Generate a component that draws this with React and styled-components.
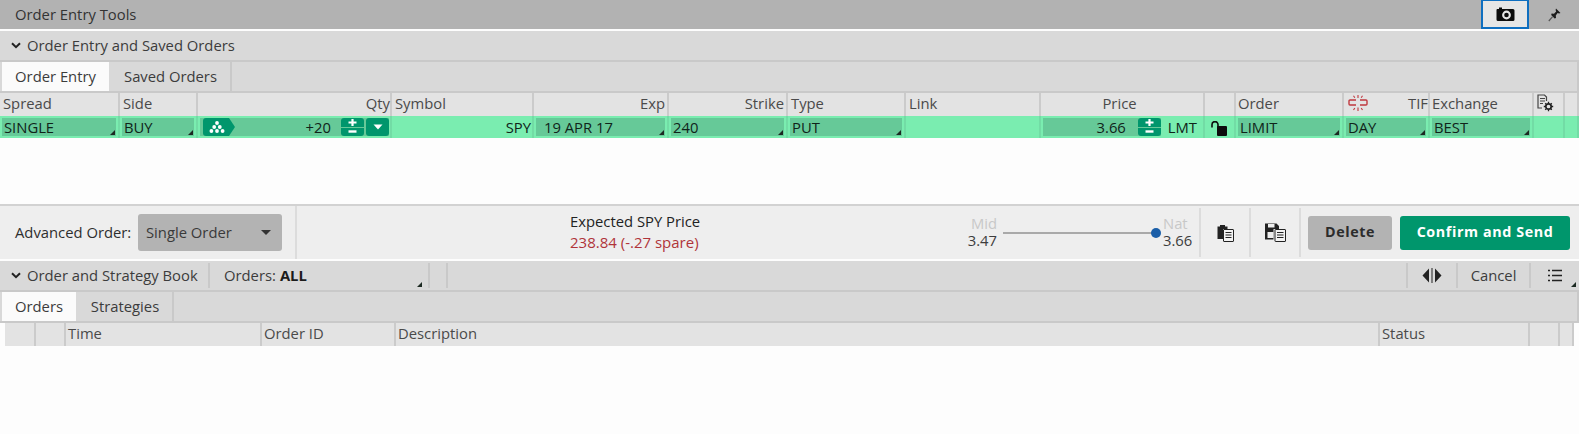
import React from "react";
import styled, { createGlobalStyle } from "styled-components";

const Global = createGlobalStyle`
  html, body { margin: 0; padding: 0; background: #fdfdfd; }
  body { font-family: "Open Sans", "Noto Sans", sans-serif; font-size: 14.8px; color: #3a3a3a; overflow: hidden; }
  * { box-sizing: border-box; }
`;

const Page = styled.div`
  width: 1579px;
  height: 434px;
  display: flex;
  flex-direction: column;
  background: #fdfdfd;
`;

const TitleBar = styled.header`
  height: 29px;
  background: #b2b2b2;
  display: flex;
  align-items: center;
  padding-left: 15px;
  color: #333;
  margin-bottom: 2px;
`;
const Title = styled.span`
  flex: 1;
  margin-bottom: 2px;
`;
const CameraButton = styled.button`
  width: 48px;
  height: 29px;
  padding: 0;
  border: 2px solid #0f6fc0;
  border-top-width: 1px;
  background: #e6e6e6;
  display: flex;
  align-items: center;
  justify-content: center;
`;
const PinButton = styled.span`
  width: 50px;
  height: 29px;
  display: flex;
  align-items: center;
  justify-content: center;
`;

const SectionBar = styled.div`
  height: 31px;
  background: #d9d9d9;
  border-bottom: 2px solid #c9c9c9;
  display: flex;
  align-items: center;
  color: #3c3c3c;
`;
const Chevron = styled.svg`
  margin-left: 11px;
  margin-right: 6px;
  flex: none;
`;
const BarSeg = styled.div`
  height: 25px;
  width: ${(p) => p.$w}px;
  flex: ${(p) => (p.$w ? "none" : 1)};
  border-right: ${(p) => (p.$noline ? "none" : "2px solid #c9c9c9")};
  display: flex;
  align-items: center;
  justify-content: ${(p) => (p.$center ? "center" : "flex-start")};
  padding-left: ${(p) => p.$pl || 0}px;
  position: relative;
`;
const Strong = styled.b`
  font-weight: 700;
  color: #1c1c1c;
  margin-left: 4px;
`;

const TabStrip = styled.div`
  height: 31px;
  background: #d9d9d9;
  border-bottom: 2px solid #c9c9c9;
  border-right: 2px solid #c9c9c9;
  display: flex;
  padding-left: 2px;
`;
const Tab = styled.div`
  height: 29px;
  width: ${(p) => p.$w}px;
  background: ${(p) => (p.$active ? "#fbfbfb" : "#d9d9d9")};
  border-right: 2px solid #c9c9c9;
  margin-right: ${(p) => (p.$active ? 2 : 0)}px;
  padding-bottom: 2px;
  display: flex;
  align-items: center;
  justify-content: center;
  color: #3c3c3c;
`;
const ActiveTab = styled(Tab)`
  border-right: 0;
`;

const COLS = "120px 78px 194px 142px 135px 119px 118px 135px 164px 31px 108px 86px 104px 31px 14px";

const HeadRow = styled.div`
  display: grid;
  grid-template-columns: ${COLS};
  height: 23px;
  background: #e3e3e3;
`;
const HeadCell = styled.div`
  border-right: 2px solid #cbcbcb;
  display: flex;
  align-items: center;
  justify-content: ${(p) => p.$align || "flex-start"};
  padding: 0 ${(p) => p.$pr ?? 3}px 3px ${(p) => p.$pl ?? 3}px;
  color: #4a4a4a;
  white-space: nowrap;
  line-height: 1;
  position: relative;
`;
const OrderRow = styled.div`
  display: grid;
  grid-template-columns: ${COLS};
  height: 22px;
  background: #7aedb0;
`;
const RowCell = styled.div`
  border-right: 2px solid #72dca5;
  padding: 2px ${(p) => p.$pr ?? 2}px 2px 2px;
  display: flex;
  min-width: 0;
`;
const Field = styled.div`
  flex: 1;
  height: 18px;
  background: #66c998;
  color: #10241a;
  display: flex;
  align-items: center;
  padding: 0 ${(p) => p.$pr ?? 2}px 0 ${(p) => p.$pl || 2}px;
  justify-content: ${(p) => p.$align || "flex-start"};
  position: relative;
  white-space: nowrap;
  line-height: 1;
`;
const Corner = styled.i`
  position: absolute;
  right: ${(p) => p.$r || 1}px;
  bottom: ${(p) => p.$b || 1}px;
  width: 0;
  height: 0;
  border-left: 5px solid transparent;
  border-bottom: 5px solid #1c2a22;
`;
const PlainCell = styled(RowCell)`
  align-items: center;
  justify-content: ${(p) => p.$align || "flex-end"};
  color: #10241a;
  line-height: 1;
  padding: ${(p) => p.$pad || "0 1px 0 0"};
`;
const Stepper = styled.span`
  width: 23px;
  height: 18px;
  display: flex;
  flex-direction: column;
  gap: 1px;
  flex: none;
`;
const StepPart = styled.span`
  flex: 1;
  background: #00966c;
  color: #fff;
  border-radius: ${(p) => (p.$top ? "3px 3px 0 0" : "0 0 3px 3px")};
  display: flex;
  align-items: center;
  justify-content: center;
`;
const DropBtn = styled.span`
  width: 23px;
  height: 18px;
  margin-left: 2px;
  flex: none;
  background: #00966c;
  border-radius: 3px;
  display: flex;
  align-items: center;
  justify-content: center;
`;
const StrategyTag = styled.span`
  width: 32px;
  height: 18px;
  background: #00966c;
  border-radius: 3px 0 0 3px;
  clip-path: polygon(0 0, 26px 0, 100% 50%, 26px 100%, 0 100%);
  display: flex;
  align-items: center;
  padding-left: 6px;
  flex: none;
  margin-right: auto;
`;
const QtyValue = styled.span`margin-right: 10px;`;
const PriceValue = styled.span`margin-right: 12px;`;
const Lmt = styled.span`
  align-self: center;
  margin-left: 7px;
  margin-right: 4px;
  color: #10241a;
  line-height: 1;
  flex: none;
`;

const Blank = styled.div`
  height: 68px;
  background: #fdfdfd;
  border-bottom: 2px solid #d2d2d2;
`;

const ActionBar = styled.div`
  height: 53px;
  background: #eeeeee;
  display: flex;
  align-items: center;
  margin-bottom: 2px;
`;
const AdvancedGroup = styled.div`
  width: 297px;
  height: 100%;
  border-right: 2px solid #dcdcdc;
  display: flex;
  align-items: center;
  justify-content: space-between;
  padding: 0 13px 0 15px;
  color: #2e2e2e;
`;
const SelectBox = styled.div`
  width: 144px;
  height: 37px;
  background: #b3b3b3;
  border-radius: 3px;
  display: flex;
  align-items: center;
  justify-content: space-between;
  padding: 0 11px 2px 8px;
  color: #3a3a3a;
`;
const Caret = styled.i`
  width: 0;
  height: 0;
  margin-top: 2px;
  border-left: 5px solid transparent;
  border-right: 5px solid transparent;
  border-top: 5px solid #333;
`;
const Expected = styled.div`
  width: 660px;
  flex: none;
  padding: 0 0 2px 273px;
  line-height: 21px;
  color: #222;
`;
const Spare = styled.div`
  color: #b0343a;
  font-size: 15px;
`;
const PriceScale = styled.div`
  width: 242px;
  height: 100%;
  display: flex;
  align-items: center;
  flex: none;
`;
const PriceStack = styled.div`
  width: ${(p) => p.$w}px;
  margin-left: ${(p) => p.$ml || 0}px;
  display: flex;
  flex-direction: column;
  align-items: ${(p) => p.$items || "flex-end"};
  line-height: 17px;
  padding-bottom: 2px;
  color: #3d3d3d;
  flex: none;
`;
const Faint = styled.span`color: #c8c8c8;`;
const Track = styled.div`
  width: 154px;
  height: 2px;
  background: #a9a9a9;
  margin-left: 6px;
  position: relative;
  flex: none;
  &::after {
    content: "";
    position: absolute;
    right: -4px;
    top: -4px;
    width: 10px;
    height: 10px;
    border-radius: 50%;
    background: #1a5ea8;
  }
`;
const IconSlot = styled.div`
  width: 50px;
  height: 49px;
  border-left: 2px solid #dcdcdc;
  display: flex;
  align-items: center;
  justify-content: center;
  flex: none;
`;
const ButtonRow = styled.div`
  flex: 1;
  height: 49px;
  border-left: 2px solid #dcdcdc;
  display: flex;
  align-items: center;
  padding-left: 7px;
  gap: 8px;
`;
const ActionButton = styled.button`
  height: 34px;
  width: ${(p) => p.$w}px;
  border: 0;
  border-radius: 3px;
  background: ${(p) => (p.$primary ? "#00966c" : "#b3b3b3")};
  color: ${(p) => (p.$primary ? "#fff" : "#2c2c2c")};
  font-family: inherit;
  font-size: 14.3px;
  font-weight: 700;
  letter-spacing: 0.6px;
  padding: 0 0 2px;
`;

const Label = styled.span`
  white-space: nowrap;
  margin-bottom: 2px;
`;

const TableHead = styled.div`
  margin-left: 5px;
  width: 1569px;
  height: 23px;
  background: #e3e3e3;
  display: grid;
  grid-template-columns: 31px 30px 196px 134px 984px 150px 30px 14px;
`;
const BrokenIconWrap = styled.span`
  position: absolute;
  left: 4px;
  top: 2px;
  display: flex;
`;

const Check = (p) => (
  <Chevron width="10" height="7" viewBox="0 0 10 7" {...p}>
    <path d="M1 1.2 5 5.2 9 1.2" fill="none" stroke="#222" strokeWidth="2" />
  </Chevron>
);
const Cam = () => (
  <svg width="19" height="15" viewBox="0 0 19 15">
    <path d="M1 2h2V0.6h3V2h11a1.5 1.5 0 0 1 1.5 1.5v9A1.5 1.5 0 0 1 17 14H2a1.5 1.5 0 0 1-1.5-1.5v-9A1.5 1.5 0 0 1 1 2z" fill="#0c0c0c" />
    <circle cx="10.5" cy="8" r="4.4" fill="#e6e6e6" />
    <circle cx="10.5" cy="8" r="2.3" fill="#0c0c0c" />
  </svg>
);
const Pin = () => (
  <svg width="13" height="14" viewBox="0 0 13 14">
    <path d="M8 0.5 12.5 5 11 5.6 9.6 5 7.8 7.4 8 10 6.6 10.4 3.2 7 3.6 5.6 6 5.8 8.2 3.6 7.6 2z" fill="#1c1c1c" />
    <path d="M4.6 8.6 0.8 13" stroke="#555" strokeWidth="1.2" />
  </svg>
);
const Plus = () => (
  <svg width="9" height="7" viewBox="0 0 9 7"><path d="M0.5 3.5h8M4.5 0v7" stroke="#fff" strokeWidth="2.2" /></svg>
);
const Minus = () => (
  <svg width="9" height="3" viewBox="0 0 9 3"><path d="M0.5 1.5h8" stroke="#fff" strokeWidth="2.4" /></svg>
);
const Step = () => (
  <Stepper>
    <StepPart $top><Plus /></StepPart>
    <StepPart><Minus /></StepPart>
  </Stepper>
);
const Dots = () => (
  <svg width="16" height="12" viewBox="0 0 16 12" fill="#fff">
    <circle cx="8" cy="2" r="1.9" />
    <circle cx="5.2" cy="6" r="1.9" />
    <circle cx="10.8" cy="6" r="1.9" />
    <circle cx="2.4" cy="10" r="1.9" />
    <circle cx="8" cy="10" r="1.9" />
    <circle cx="13.6" cy="10" r="1.9" />
  </svg>
);
const Lock = () => (
  <svg width="17" height="15" viewBox="0 0 17 15">
    <path d="M1 6.5V3.6a3 3 0 0 1 6 0V6.5" fill="none" stroke="#0c0c0c" strokeWidth="1.6" />
    <rect x="6" y="5" width="10" height="10" rx="1" fill="#0c0c0c" />
  </svg>
);
const BrokenLink = () => (
  <svg width="20" height="16" viewBox="0 0 20 16" fill="none" stroke="#c0393f" strokeWidth="1.4">
    <path d="M8 5H2a1 1 0 0 0-1 1v3a1 1 0 0 0 1 1h6M12 5h6a1 1 0 0 1 1 1v3a1 1 0 0 1-1 1h-6" />
    <path d="M10 0v3M5.5 0.8l1.3 2M14.5 0.8l-1.3 2M10 12.5V16M5.5 15l1.3-2M14.5 15l-1.3-2" strokeWidth="1.1" />
  </svg>
);
const GearDoc = () => (
  <svg width="17" height="18" viewBox="0 0 17 18">
    <path d="M9.5 7V3L7.5 1H1v13h4" fill="none" stroke="#444" strokeWidth="1.2" />
    <path d="M3 4.5h5M3 7h5M3 9.5h3" stroke="#444" strokeWidth="1.1" />
    <circle cx="11.5" cy="12.5" r="2.7" fill="none" stroke="#222" strokeWidth="1.7" />
    <path d="M11.5 7.8v2M11.5 15.2v2M6.8 12.5h2M14.2 12.5h2M8.2 9.2l1.4 1.4M13.4 14.4l1.4 1.4M14.8 9.2l-1.4 1.4M9.6 14.4l-1.4 1.4" stroke="#222" strokeWidth="1.3" />
  </svg>
);
const Paste = () => (
  <svg width="17" height="19" viewBox="0 0 17 19">
    <path d="M0.5 3.5H3V2h5v1.5h2.5V6H6v10H0.5z" fill="#222" />
    <rect x="6.5" y="6.5" width="10" height="12" rx="0.5" fill="#f3f3f3" stroke="#222" />
    <path d="M8.5 9.5h6M8.5 12h6M8.5 14.5h6" stroke="#222" strokeWidth="1.1" />
  </svg>
);
const SaveDoc = () => (
  <svg width="21" height="19" viewBox="0 0 21 19">
    <path d="M0 0.5h11.5L14 3v3H8.5v10.5H0z" fill="#222" />
    <rect x="3" y="1" width="6.5" height="3.5" fill="#eee" />
    <rect x="2.5" y="9" width="6" height="6" fill="#eee" />
    <rect x="10" y="6.5" width="10.5" height="12" rx="0.5" fill="#f3f3f3" stroke="#222" />
    <path d="M12 9.5h6.5M12 12h6.5M12 14.5h6.5" stroke="#222" strokeWidth="1.1" />
  </svg>
);
const Split = () => (
  <svg width="20" height="15" viewBox="0 0 20 15" fill="#222">
    <path d="M7 0.5V14.5L0.5 7.5zM13 0.5V14.5L19.5 7.5z" />
    <path d="M10 0v15" stroke="#555" strokeWidth="1.4" />
  </svg>
);
const ListIcon = () => (
  <svg width="14" height="13" viewBox="0 0 14 13" stroke="#222" strokeWidth="1.6">
    <path d="M4 1.5h10M4 6.5h10M4 11.5h10M0 1.5h2M0 6.5h2M0 11.5h2" />
  </svg>
);
const WhiteTri = () => (
  <svg width="10" height="6" viewBox="0 0 10 6"><path d="M0.5 0.5h9L5 5.5z" fill="#fff" /></svg>
);

const SelectField = ({ children, pl }) => (
  <RowCell>
    <Field $pl={pl}>
      {children}
      <Corner />
    </Field>
  </RowCell>
);

export default function App() {
  return (
    <Page>
      <Global />
      <TitleBar>
        <Title>Order Entry Tools</Title>
        <CameraButton aria-label="Snapshot"><Cam /></CameraButton>
        <PinButton><Pin /></PinButton>
      </TitleBar>

      <SectionBar>
        <Check />
        <Label>Order Entry and Saved Orders</Label>
      </SectionBar>
      <TabStrip>
        <ActiveTab $active $w={107}>Order Entry</ActiveTab>
        <Tab $w={121}>Saved Orders</Tab>
      </TabStrip>

      <HeadRow>
        <HeadCell>Spread</HeadCell>
        <HeadCell>Side</HeadCell>
        <HeadCell $align="flex-end" $pr={0}>Qty</HeadCell>
        <HeadCell>Symbol</HeadCell>
        <HeadCell $align="flex-end" $pr={2}>Exp</HeadCell>
        <HeadCell $align="flex-end" $pr={2}>Strike</HeadCell>
        <HeadCell>Type</HeadCell>
        <HeadCell>Link</HeadCell>
        <HeadCell $align="center" $pr={8}>Price</HeadCell>
        <HeadCell />
        <HeadCell $pl={2}>Order</HeadCell>
        <HeadCell $align="flex-end" $pr={0}><BrokenIconWrap><BrokenLink /></BrokenIconWrap>TIF</HeadCell>
        <HeadCell $pl={2}>Exchange</HeadCell>
        <HeadCell><GearDoc /></HeadCell>
        <HeadCell />
      </HeadRow>

      <OrderRow>
        <SelectField>SINGLE</SelectField>
        <SelectField>BUY</SelectField>
        <RowCell $pr={1}>
          <Field $pr={0} $pl={3} $align="flex-end">
            <StrategyTag><Dots /></StrategyTag>
            <QtyValue>+20</QtyValue>
            <Step />
            <DropBtn><WhiteTri /></DropBtn>
          </Field>
        </RowCell>
        <PlainCell>SPY</PlainCell>
        <SelectField pl={8}>19 APR 17</SelectField>
        <SelectField>240</SelectField>
        <SelectField>PUT</SelectField>
        <RowCell />
        <RowCell>
          <Field $align="flex-end" $pr={0}>
            <PriceValue>3.66</PriceValue>
            <Step />
          </Field>
          <Lmt>LMT</Lmt>
        </RowCell>
        <PlainCell $align="center" $pad="3px 0 0 0"><Lock /></PlainCell>
        <SelectField>LIMIT</SelectField>
        <SelectField>DAY</SelectField>
        <SelectField>BEST</SelectField>
        <RowCell />
        <RowCell />
      </OrderRow>

      <Blank />

      <ActionBar>
        <AdvancedGroup>
          <Label>Advanced Order:</Label>
          <SelectBox>Single Order<Caret /></SelectBox>
        </AdvancedGroup>
        <Expected>
          <div>Expected SPY Price</div>
          <Spare>238.84 (-.27 spare)</Spare>
        </Expected>
        <PriceScale>
          <PriceStack $w={40}><Faint>Mid</Faint>3.47</PriceStack>
          <Track />
          <PriceStack $w={32} $ml={6} $items="flex-start"><Faint>Nat</Faint>3.66</PriceStack>
        </PriceScale>
        <IconSlot><Paste /></IconSlot>
        <IconSlot><SaveDoc /></IconSlot>
        <ButtonRow>
          <ActionButton $w={84}>Delete</ActionButton>
          <ActionButton $primary $w={170}>Confirm and Send</ActionButton>
        </ButtonRow>
      </ActionBar>

      <SectionBar>
        <Check />
        <BarSeg $w={183}><Label>Order and Strategy Book</Label></BarSeg>
        <BarSeg $w={220} $pl={14}><Label>Orders:<Strong>ALL</Strong></Label><Corner $r={6} /></BarSeg>
        <BarSeg $w={18} />
        <BarSeg $w={960} />
        <BarSeg $w={50} $center><Split /></BarSeg>
        <BarSeg $w={73} $center><Label>Cancel</Label></BarSeg>
        <BarSeg $noline $center><ListIcon /><Corner $r={3} /></BarSeg>
      </SectionBar>
      <TabStrip>
        <ActiveTab $active $w={74}>Orders</ActiveTab>
        <Tab $w={96}>Strategies</Tab>
      </TabStrip>
      <TableHead>
        <HeadCell />
        <HeadCell />
        <HeadCell $pl={2}>Time</HeadCell>
        <HeadCell $pl={2}>Order ID</HeadCell>
        <HeadCell $pl={2}>Description</HeadCell>
        <HeadCell $pl={2}>Status</HeadCell>
        <HeadCell />
        <HeadCell />
      </TableHead>
    </Page>
  );
}
